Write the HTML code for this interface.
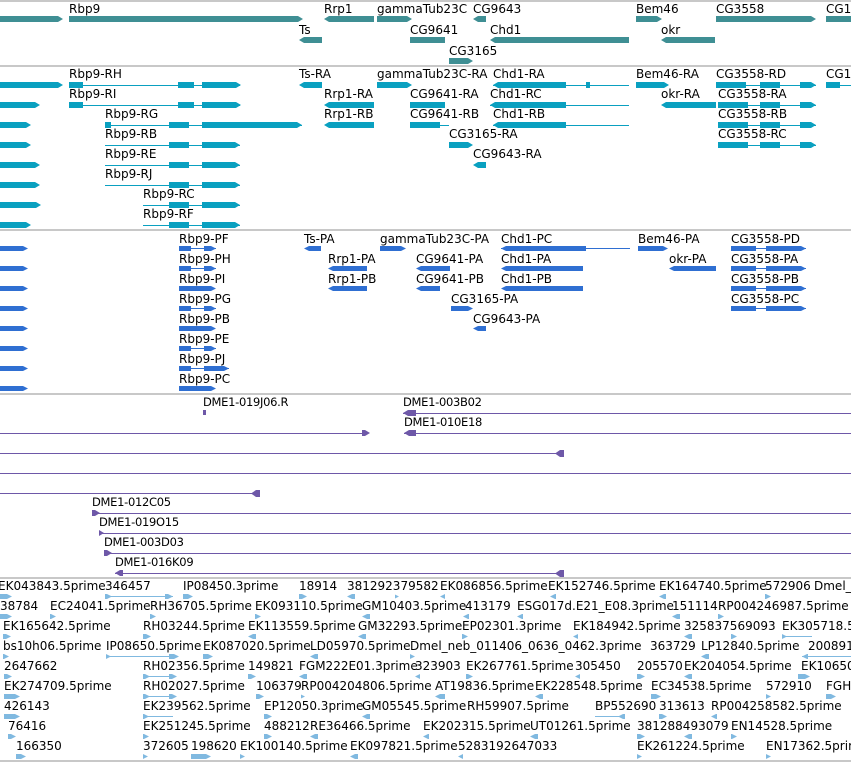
<!DOCTYPE html>
<html><head><meta charset="utf-8"><style>
body{margin:0;width:851px;height:762px;overflow:hidden;background:#fff;position:relative;font-family:"DejaVu Sans","Liberation Sans",sans-serif}
.l{position:absolute;font-size:12px;line-height:13px;white-space:nowrap;color:#000}
.p{position:absolute;font-size:11.5px;line-height:13px;white-space:nowrap;color:#000;letter-spacing:-0.3px}
.b{position:absolute;height:6px}
.g{background:#3f8f94}
.t{background:#0aa0c0}
.c{background:#2f6fd2}
.u{background:#6e58a8}
.e{background:#80b9e0}
.h{position:absolute;height:1px}
.sep{position:absolute;left:0;width:851px;height:2px;background:#c8c8c8}
.r{clip-path:polygon(0 0,calc(100% - 5px) 0,100% 50%,calc(100% - 5px) 100%,0 100%)}
.lf{clip-path:polygon(5px 0,100% 0,100% 100%,5px 100%,0 50%)}
</style></head><body>
<div class="sep" style="top:0"></div>
<div class="sep" style="top:65px"></div>
<div class="sep" style="top:229px"></div>
<div class="sep" style="top:393px"></div>
<div class="sep" style="top:577px"></div>
<div class="sep" style="top:760px"></div>

<!-- Section 1 genes -->
<div class="l" style="left:69px;top:3px">Rbp9</div>
<div class="l" style="left:324px;top:3px">Rrp1</div>
<div class="l" style="left:377px;top:3px">gammaTub23C</div>
<div class="l" style="left:473px;top:3px">CG9643</div>
<div class="l" style="left:636px;top:3px">Bem46</div>
<div class="l" style="left:716px;top:3px">CG3558</div>
<div class="l" style="left:826px;top:3px">CG1</div>
<div class="b g r" style="left:0;top:16px;width:63px"></div>
<div class="b g r" style="left:69px;top:16px;width:234px"></div>
<div class="b g lf" style="left:324px;top:16px;width:50px"></div>
<div class="b g r" style="left:377px;top:16px;width:35px"></div>
<div class="b g lf" style="left:473px;top:16px;width:13px"></div>
<div class="b g r" style="left:636px;top:16px;width:26px"></div>
<div class="b g r" style="left:716px;top:16px;width:100px"></div>
<div class="b g" style="left:826px;top:16px;width:25px"></div>
<div class="l" style="left:299px;top:24px">Ts</div>
<div class="l" style="left:410px;top:24px">CG9641</div>
<div class="l" style="left:490px;top:24px">Chd1</div>
<div class="l" style="left:661px;top:24px">okr</div>
<div class="b g lf" style="left:299px;top:37px;width:23px"></div>
<div class="b g" style="left:420px;top:37px;width:25px;left:410px;width:35px"></div>
<div class="b g lf" style="left:490px;top:37px;width:139px"></div>
<div class="b g lf" style="left:661px;top:37px;width:54px"></div>
<div class="l" style="left:449px;top:45px">CG3165</div>
<div class="b g r" style="left:449px;top:58px;width:24px"></div>

<!-- Section 2 transcripts -->
<div class="l" style="left:69px;top:68px">Rbp9-RH</div>
<div class="l" style="left:299px;top:68px">Ts-RA</div>
<div class="l" style="left:377px;top:68px">gammaTub23C-RA</div>
<div class="l" style="left:493px;top:68px">Chd1-RA</div>
<div class="l" style="left:636px;top:68px">Bem46-RA</div>
<div class="l" style="left:716px;top:68px">CG3558-RD</div>
<div class="l" style="left:826px;top:68px">CG1</div>
<div class="b t r" style="left:0;top:82px;width:63px"></div>
<div class="h t" style="left:69px;top:85px;width:171px"></div>
<div class="b t" style="left:69px;top:82px;width:14px"></div>
<div class="b t" style="left:178px;top:82px;width:16px"></div>
<div class="b t r" style="left:202px;top:82px;width:39px"></div>
<div class="b t lf" style="left:299px;top:82px;width:23px"></div>
<div class="b t r" style="left:377px;top:82px;width:35px"></div>
<div class="h t" style="left:493px;top:85px;width:136px"></div>
<div class="b t lf" style="left:493px;top:82px;width:73px"></div>
<div class="b t" style="left:586px;top:82px;width:4px"></div>
<div class="b t r" style="left:636px;top:82px;width:33px"></div>
<div class="h t" style="left:716px;top:85px;width:100px"></div>
<div class="b t" style="left:716px;top:82px;width:30px"></div>
<div class="b t" style="left:760px;top:82px;width:20px"></div>
<div class="b t r" style="left:800px;top:82px;width:16px"></div>
<div class="b t" style="left:826px;top:82px;width:14px"></div>
<div class="h t" style="left:826px;top:85px;width:25px"></div>

<div class="l" style="left:69px;top:88px">Rbp9-RI</div>
<div class="l" style="left:324px;top:88px">Rrp1-RA</div>
<div class="l" style="left:410px;top:88px">CG9641-RA</div>
<div class="l" style="left:490px;top:88px">Chd1-RC</div>
<div class="l" style="left:661px;top:88px">okr-RA</div>
<div class="l" style="left:718px;top:88px">CG3558-RA</div>
<div class="b t r" style="left:0;top:102px;width:40px"></div>
<div class="h t" style="left:69px;top:105px;width:171px"></div>
<div class="b t" style="left:69px;top:102px;width:14px"></div>
<div class="b t" style="left:178px;top:102px;width:16px"></div>
<div class="b t r" style="left:202px;top:102px;width:39px"></div>
<div class="b t lf" style="left:324px;top:102px;width:50px"></div>
<div class="b t" style="left:410px;top:102px;width:35px"></div>
<div class="h t" style="left:490px;top:105px;width:139px"></div>
<div class="b t lf" style="left:490px;top:102px;width:76px"></div>
<div class="b t lf" style="left:661px;top:102px;width:55px"></div>
<div class="h t" style="left:718px;top:105px;width:98px"></div>
<div class="b t" style="left:718px;top:102px;width:30px"></div>
<div class="b t" style="left:760px;top:102px;width:20px"></div>
<div class="b t r" style="left:800px;top:102px;width:16px"></div>

<div class="l" style="left:105px;top:108px">Rbp9-RG</div>
<div class="l" style="left:324px;top:108px">Rrp1-RB</div>
<div class="l" style="left:410px;top:108px">CG9641-RB</div>
<div class="l" style="left:493px;top:108px">Chd1-RB</div>
<div class="l" style="left:718px;top:108px">CG3558-RB</div>
<div class="b t r" style="left:0;top:122px;width:31px"></div>
<div class="h t" style="left:105px;top:125px;width:197px"></div>
<div class="b t" style="left:105px;top:122px;width:6px"></div>
<div class="b t" style="left:169px;top:122px;width:20px"></div>
<div class="b t r" style="left:202px;top:122px;width:100px"></div>
<div class="b t lf" style="left:324px;top:122px;width:50px"></div>
<div class="b t" style="left:410px;top:122px;width:30px"></div>
<div class="h t" style="left:410px;top:125px;width:39px"></div>
<div class="h t" style="left:493px;top:125px;width:136px"></div>
<div class="b t lf" style="left:493px;top:122px;width:73px"></div>
<div class="h t" style="left:718px;top:125px;width:98px"></div>
<div class="b t" style="left:718px;top:122px;width:30px"></div>
<div class="b t" style="left:760px;top:122px;width:20px"></div>
<div class="b t r" style="left:800px;top:122px;width:16px"></div>

<div class="l" style="left:105px;top:128px">Rbp9-RB</div>
<div class="l" style="left:449px;top:128px">CG3165-RA</div>
<div class="l" style="left:718px;top:128px">CG3558-RC</div>
<div class="b t r" style="left:0;top:142px;width:31px"></div>
<div class="h t" style="left:105px;top:145px;width:135px"></div>
<div class="b t" style="left:169px;top:142px;width:20px"></div>
<div class="b t r" style="left:202px;top:142px;width:38px"></div>
<div class="b t r" style="left:449px;top:142px;width:24px"></div>
<div class="h t" style="left:718px;top:145px;width:98px"></div>
<div class="b t" style="left:718px;top:142px;width:30px"></div>
<div class="b t" style="left:760px;top:142px;width:20px"></div>
<div class="b t r" style="left:800px;top:142px;width:16px"></div>

<div class="l" style="left:105px;top:148px">Rbp9-RE</div>
<div class="l" style="left:473px;top:148px">CG9643-RA</div>
<div class="b t r" style="left:0;top:162px;width:40px"></div>
<div class="h t" style="left:105px;top:165px;width:135px"></div>
<div class="b t" style="left:169px;top:162px;width:20px"></div>
<div class="b t r" style="left:202px;top:162px;width:38px"></div>
<div class="b t lf" style="left:473px;top:162px;width:13px"></div>

<div class="l" style="left:105px;top:168px">Rbp9-RJ</div>
<div class="b t r" style="left:0;top:182px;width:40px"></div>
<div class="h t" style="left:105px;top:185px;width:135px"></div>
<div class="b t" style="left:169px;top:182px;width:20px"></div>
<div class="b t r" style="left:202px;top:182px;width:38px"></div>

<div class="l" style="left:143px;top:188px">Rbp9-RC</div>
<div class="b t r" style="left:0;top:202px;width:41px"></div>
<div class="h t" style="left:143px;top:205px;width:97px"></div>
<div class="b t" style="left:169px;top:202px;width:20px"></div>
<div class="b t r" style="left:202px;top:202px;width:38px"></div>

<div class="l" style="left:143px;top:208px">Rbp9-RF</div>
<div class="b t r" style="left:0;top:222px;width:31px"></div>
<div class="h t" style="left:143px;top:225px;width:97px"></div>
<div class="b t" style="left:169px;top:222px;width:20px"></div>
<div class="b t r" style="left:202px;top:222px;width:38px"></div>

<!-- Section 3 proteins -->
<div class="l" style="left:179px;top:233px">Rbp9-PF</div>
<div class="l" style="left:304px;top:233px">Ts-PA</div>
<div class="l" style="left:380px;top:233px">gammaTub23C-PA</div>
<div class="l" style="left:501px;top:233px">Chd1-PC</div>
<div class="l" style="left:638px;top:233px">Bem46-PA</div>
<div class="l" style="left:731px;top:233px">CG3558-PD</div>
<div class="l" style="left:328px;top:253px">Rrp1-PA</div>
<div class="l" style="left:416px;top:253px">CG9641-PA</div>
<div class="l" style="left:501px;top:253px">Chd1-PA</div>
<div class="l" style="left:669px;top:253px">okr-PA</div>
<div class="l" style="left:731px;top:253px">CG3558-PA</div>
<div class="l" style="left:179px;top:253px">Rbp9-PH</div>
<div class="l" style="left:179px;top:273px">Rbp9-PI</div>
<div class="l" style="left:328px;top:273px">Rrp1-PB</div>
<div class="l" style="left:416px;top:273px">CG9641-PB</div>
<div class="l" style="left:501px;top:273px">Chd1-PB</div>
<div class="l" style="left:731px;top:273px">CG3558-PB</div>
<div class="l" style="left:179px;top:293px">Rbp9-PG</div>
<div class="l" style="left:451px;top:293px">CG3165-PA</div>
<div class="l" style="left:731px;top:293px">CG3558-PC</div>
<div class="l" style="left:179px;top:313px">Rbp9-PB</div>
<div class="l" style="left:473px;top:313px">CG9643-PA</div>
<div class="l" style="left:179px;top:333px">Rbp9-PE</div>
<div class="l" style="left:179px;top:353px">Rbp9-PJ</div>
<div class="l" style="left:179px;top:373px">Rbp9-PC</div>

<div class="b c r" style="left:0;top:246px;width:28px;height:5px"></div>
<div class="b c r" style="left:0;top:266px;width:28px;height:5px"></div>
<div class="b c r" style="left:0;top:286px;width:28px;height:5px"></div>
<div class="b c r" style="left:0;top:306px;width:28px;height:5px"></div>
<div class="b c r" style="left:0;top:326px;width:28px;height:5px"></div>
<div class="b c r" style="left:0;top:346px;width:28px;height:5px"></div>
<div class="b c r" style="left:0;top:366px;width:28px;height:5px"></div>
<div class="b c r" style="left:0;top:386px;width:28px;height:5px"></div>

<div class="h c" style="left:179px;top:248px;width:37px"></div><div class="b c" style="left:179px;top:246px;width:12px;height:5px"></div><div class="b c r" style="left:204px;top:246px;width:12px;height:5px"></div>
<div class="h c" style="left:179px;top:268px;width:37px"></div><div class="b c" style="left:179px;top:266px;width:12px;height:5px"></div><div class="b c r" style="left:204px;top:266px;width:12px;height:5px"></div>
<div class="b c r" style="left:179px;top:286px;width:37px;height:5px"></div>
<div class="h c" style="left:179px;top:308px;width:37px"></div><div class="b c" style="left:179px;top:306px;width:12px;height:5px"></div><div class="b c r" style="left:204px;top:306px;width:12px;height:5px"></div>
<div class="b c r" style="left:179px;top:326px;width:37px;height:5px"></div>
<div class="h c" style="left:179px;top:348px;width:37px"></div><div class="b c" style="left:179px;top:346px;width:12px;height:5px"></div><div class="b c r" style="left:204px;top:346px;width:12px;height:5px"></div>
<div class="h c" style="left:179px;top:368px;width:50px"></div><div class="b c" style="left:179px;top:366px;width:12px;height:5px"></div><div class="b c r" style="left:204px;top:366px;width:25px;height:5px"></div>
<div class="b c r" style="left:179px;top:386px;width:37px;height:5px"></div>

<div class="b c lf" style="left:304px;top:246px;width:17px;height:5px"></div>
<div class="b c r" style="left:380px;top:246px;width:26px;height:5px"></div>
<div class="h c" style="left:501px;top:248px;width:129px"></div><div class="b c lf" style="left:501px;top:246px;width:85px;height:5px"></div>
<div class="b c r" style="left:638px;top:246px;width:30px;height:5px"></div>
<div class="h c" style="left:731px;top:248px;width:75px"></div><div class="b c" style="left:731px;top:246px;width:25px;height:5px"></div><div class="b c r" style="left:766px;top:246px;width:40px;height:5px"></div>
<div class="b c lf" style="left:328px;top:266px;width:39px;height:5px"></div>
<div class="b c lf" style="left:416px;top:266px;width:34px;height:5px"></div>
<div class="b c lf" style="left:501px;top:266px;width:82px;height:5px"></div>
<div class="b c lf" style="left:669px;top:266px;width:47px;height:5px"></div>
<div class="h c" style="left:731px;top:268px;width:75px"></div><div class="b c" style="left:731px;top:266px;width:25px;height:5px"></div><div class="b c r" style="left:766px;top:266px;width:40px;height:5px"></div>
<div class="b c lf" style="left:328px;top:286px;width:39px;height:5px"></div>
<div class="b c lf" style="left:416px;top:286px;width:24px;height:5px"></div>
<div class="b c lf" style="left:501px;top:286px;width:82px;height:5px"></div>
<div class="h c" style="left:731px;top:288px;width:75px"></div><div class="b c" style="left:731px;top:286px;width:25px;height:5px"></div><div class="b c r" style="left:766px;top:286px;width:40px;height:5px"></div>
<div class="b c r" style="left:451px;top:306px;width:22px;height:5px"></div>
<div class="h c" style="left:731px;top:308px;width:75px"></div><div class="b c" style="left:731px;top:306px;width:25px;height:5px"></div><div class="b c r" style="left:766px;top:306px;width:40px;height:5px"></div>
<div class="b c lf" style="left:473px;top:326px;width:13px;height:5px"></div>

<!-- Section 4 purple -->
<div class="p" style="left:203px;top:396px">DME1-019J06.R</div>
<div class="b u" style="left:203px;top:410px;width:3px;height:5px"></div>
<div class="p" style="left:403px;top:396px">DME1-003B02</div>
<div class="h u" style="left:403px;top:413px;width:448px"></div><div class="b u lf" style="left:403px;top:410px;width:13px;height:6px"></div>
<div class="p" style="left:404px;top:416px">DME1-010E18</div>
<div class="h u" style="left:404px;top:433px;width:447px"></div><div class="b u lf" style="left:404px;top:430px;width:12px;height:6px"></div>
<div class="h u" style="left:0;top:433px;width:366px"></div><div class="b u r" style="left:362px;top:430px;width:8px;height:6px"></div>
<div class="h u" style="left:0;top:453px;width:560px"></div><div class="b u lf" style="left:555px;top:450px;width:9px;height:7px"></div>
<div class="h u" style="left:0;top:473px;width:851px"></div>
<div class="h u" style="left:0;top:493px;width:256px"></div><div class="b u lf" style="left:251px;top:490px;width:9px;height:7px"></div>
<div class="p" style="left:92px;top:496px">DME1-012C05</div>
<div class="h u" style="left:92px;top:513px;width:759px"></div><div class="b u r" style="left:92px;top:510px;width:8px;height:6px"></div>
<div class="p" style="left:99px;top:516px">DME1-019O15</div>
<div class="h u" style="left:99px;top:533px;width:752px"></div><div class="b u r" style="left:99px;top:530px;width:5px;height:6px"></div>
<div class="p" style="left:104px;top:536px">DME1-003D03</div>
<div class="h u" style="left:104px;top:553px;width:747px"></div><div class="b u r" style="left:104px;top:550px;width:8px;height:6px"></div>
<div class="p" style="left:115px;top:556px">DME1-016K09</div>
<div class="h u" style="left:115px;top:573px;width:446px"></div><div class="b u lf" style="left:115px;top:570px;width:8px;height:6px"></div><div class="b u lf" style="left:555px;top:570px;width:9px;height:7px"></div>

<!-- Section 5 ESTs -->
<div class="l" style="left:-2px;top:580px">EK043843.5prime</div><div class="l" style="left:105px;top:580px">346457</div><div class="l" style="left:183px;top:580px">IP08450.3prime</div><div class="l" style="left:299px;top:580px">18914</div><div class="l" style="left:347px;top:580px">381292379582</div><div class="l" style="left:440px;top:580px">EK086856.5prime</div><div class="l" style="left:548px;top:580px">EK152746.5prime</div><div class="l" style="left:659px;top:580px">EK164740.5prime</div><div class="l" style="left:765px;top:580px">572906</div><div class="l" style="left:814px;top:580px">Dmel_n</div>
<div class="l" style="left:0;top:600px">38784</div><div class="l" style="left:50px;top:600px">EC24041.5prime</div><div class="l" style="left:150px;top:600px">RH36705.5prime</div><div class="l" style="left:255px;top:600px">EK093110.5prime</div><div class="l" style="left:362px;top:600px">GM10403.5prime</div><div class="l" style="left:465px;top:600px">413179</div><div class="l" style="left:517px;top:600px">ESG017d.E21_E08.3prime</div><div class="l" style="left:672px;top:600px">151114</div><div class="l" style="left:718px;top:600px">RP004246987.5prime</div>
<div class="l" style="left:3px;top:620px">EK165642.5prime</div><div class="l" style="left:143px;top:620px">RH03244.5prime</div><div class="l" style="left:248px;top:620px">EK113559.5prime</div><div class="l" style="left:358px;top:620px">GM32293.5prime</div><div class="l" style="left:462px;top:620px">EP02301.3prime</div><div class="l" style="left:573px;top:620px">EK184942.5prime</div><div class="l" style="left:684px;top:620px">325837569093</div><div class="l" style="left:782px;top:620px">EK305718.5</div>
<div class="l" style="left:3px;top:640px">bs10h06.5prime</div><div class="l" style="left:106px;top:640px">IP08650.5prime</div><div class="l" style="left:203px;top:640px">EK087020.5prime</div><div class="l" style="left:310px;top:640px">LD05970.5prime</div><div class="l" style="left:410px;top:640px">Dmel_neb_011406_0636_0462.3prime</div><div class="l" style="left:650px;top:640px">363729</div><div class="l" style="left:701px;top:640px">LP12840.5prime</div><div class="l" style="left:808px;top:640px">200891</div>
<div class="l" style="left:4px;top:660px">2647662</div><div class="l" style="left:143px;top:660px">RH02356.5prime</div><div class="l" style="left:248px;top:660px">149821</div><div class="l" style="left:299px;top:660px">FGM222E01.3prime</div><div class="l" style="left:415px;top:660px">323903</div><div class="l" style="left:466px;top:660px">EK267761.5prime</div><div class="l" style="left:575px;top:660px">305450</div><div class="l" style="left:637px;top:660px">205570</div><div class="l" style="left:684px;top:660px">EK204054.5prime</div><div class="l" style="left:801px;top:660px">EK10650</div>
<div class="l" style="left:4px;top:680px">EK274709.5prime</div><div class="l" style="left:143px;top:680px">RH02027.5prime</div><div class="l" style="left:256px;top:680px">106379</div><div class="l" style="left:301px;top:680px">RP004204806.5prime</div><div class="l" style="left:435px;top:680px">AT19836.5prime</div><div class="l" style="left:535px;top:680px">EK228548.5prime</div><div class="l" style="left:651px;top:680px">EC34538.5prime</div><div class="l" style="left:766px;top:680px">572910</div><div class="l" style="left:826px;top:680px">FGH</div>
<div class="l" style="left:4px;top:700px">426143</div><div class="l" style="left:143px;top:700px">EK239562.5prime</div><div class="l" style="left:264px;top:700px">EP12050.3prime</div><div class="l" style="left:362px;top:700px">GM05545.5prime</div><div class="l" style="left:467px;top:700px">RH59907.5prime</div><div class="l" style="left:595px;top:700px">BP552690</div><div class="l" style="left:659px;top:700px">313613</div><div class="l" style="left:711px;top:700px">RP004258582.5prime</div>
<div class="l" style="left:8px;top:720px">76416</div><div class="l" style="left:143px;top:720px">EK251245.5prime</div><div class="l" style="left:264px;top:720px">488212</div><div class="l" style="left:310px;top:720px">RE36466.5prime</div><div class="l" style="left:423px;top:720px">EK202315.5prime</div><div class="l" style="left:530px;top:720px">UT01261.5prime</div><div class="l" style="left:637px;top:720px">381288493079</div><div class="l" style="left:731px;top:720px">EN14528.5prime</div>
<div class="l" style="left:16px;top:740px">166350</div><div class="l" style="left:143px;top:740px">372605</div><div class="l" style="left:191px;top:740px">198620</div><div class="l" style="left:240px;top:740px">EK100140.5prime</div><div class="l" style="left:350px;top:740px">EK097821.5prime</div><div class="l" style="left:458px;top:740px">5283192647033</div><div class="l" style="left:637px;top:740px">EK261224.5prime</div><div class="l" style="left:766px;top:740px">EN17362.5prime</div>

<!-- EST markers -->
<div class="b e r" style="left:0;top:594px;width:12px;height:5px"></div><div class="h e" style="left:105px;top:596px;width:68px"></div><div class="b e r" style="left:105px;top:594px;width:7px;height:5px"></div><div class="b e r" style="left:165px;top:594px;width:8px;height:5px"></div><div class="b e r" style="left:183px;top:594px;width:10px;height:5px"></div><div class="b e r" style="left:299px;top:594px;width:8px;height:5px"></div><div class="b e lf" style="left:347px;top:594px;width:8px;height:5px"></div><div class="b e r" style="left:395px;top:594px;width:4px;height:5px"></div><div class="b e lf" style="left:440px;top:594px;width:5px;height:5px"></div><div class="b e lf" style="left:550px;top:594px;width:6px;height:5px"></div><div class="b e lf" style="left:659px;top:594px;width:7px;height:5px"></div><div class="b e r" style="left:765px;top:594px;width:6px;height:5px"></div>
<div class="b e r" style="left:0;top:614px;width:12px;height:5px"></div><div class="b e r" style="left:50px;top:614px;width:6px;height:5px"></div><div class="b e r" style="left:150px;top:614px;width:6px;height:5px"></div><div class="b e r" style="left:255px;top:614px;width:6px;height:5px"></div><div class="b e lf" style="left:362px;top:614px;width:8px;height:5px"></div><div class="b e lf" style="left:463px;top:614px;width:6px;height:5px"></div><div class="b e lf" style="left:517px;top:614px;width:6px;height:5px"></div><div class="b e lf" style="left:672px;top:614px;width:8px;height:5px"></div><div class="b e r" style="left:718px;top:614px;width:6px;height:5px"></div>
<div class="b e r" style="left:3px;top:634px;width:8px;height:5px"></div><div class="b e r" style="left:143px;top:634px;width:8px;height:5px"></div><div class="b e lf" style="left:248px;top:634px;width:8px;height:5px"></div><div class="b e lf" style="left:358px;top:634px;width:8px;height:5px"></div><div class="b e r" style="left:462px;top:634px;width:6px;height:5px"></div><div class="b e lf" style="left:573px;top:634px;width:5px;height:5px"></div><div class="b e lf" style="left:684px;top:634px;width:8px;height:5px"></div><div class="b e r" style="left:731px;top:634px;width:6px;height:5px"></div><div class="h e" style="left:782px;top:636px;width:30px"></div><div class="b e r" style="left:782px;top:634px;width:5px;height:5px"></div>
<div class="b e r" style="left:3px;top:654px;width:6px;height:5px"></div><div class="h e" style="left:106px;top:656px;width:67px"></div><div class="b e r" style="left:106px;top:654px;width:5px;height:5px"></div><div class="b e r" style="left:169px;top:654px;width:10px;height:5px"></div><div class="b e r" style="left:203px;top:654px;width:10px;height:5px"></div><div class="b e lf" style="left:310px;top:654px;width:8px;height:5px"></div><div class="b e r" style="left:410px;top:654px;width:5px;height:5px"></div><div class="b e lf" style="left:701px;top:654px;width:8px;height:5px"></div><div class="h e" style="left:802px;top:656px;width:49px"></div><div class="b e lf" style="left:802px;top:654px;width:6px;height:5px"></div>
<div class="b e r" style="left:4px;top:674px;width:8px;height:5px"></div><div class="h e" style="left:143px;top:676px;width:30px"></div><div class="b e r" style="left:143px;top:674px;width:7px;height:5px"></div><div class="b e r" style="left:169px;top:674px;width:8px;height:5px"></div><div class="b e r" style="left:248px;top:674px;width:8px;height:5px"></div><div class="b e lf" style="left:299px;top:674px;width:8px;height:5px"></div><div class="b e lf" style="left:415px;top:674px;width:5px;height:5px"></div><div class="b e r" style="left:466px;top:674px;width:7px;height:5px"></div><div class="b e lf" style="left:575px;top:674px;width:5px;height:5px"></div><div class="b e r" style="left:637px;top:674px;width:8px;height:5px"></div><div class="b e lf" style="left:684px;top:674px;width:8px;height:5px"></div><div class="b e r" style="left:798px;top:674px;width:12px;height:5px"></div>
<div class="b e r" style="left:4px;top:694px;width:16px;height:5px"></div><div class="h e" style="left:143px;top:696px;width:30px"></div><div class="b e r" style="left:143px;top:694px;width:7px;height:5px"></div><div class="b e r" style="left:169px;top:694px;width:8px;height:5px"></div><div class="b e r" style="left:256px;top:694px;width:8px;height:5px"></div><div class="b e r" style="left:301px;top:694px;width:4px;height:5px"></div><div class="b e lf" style="left:435px;top:694px;width:10px;height:5px"></div><div class="b e lf" style="left:535px;top:694px;width:8px;height:5px"></div><div class="b e r" style="left:651px;top:694px;width:10px;height:5px"></div><div class="b e r" style="left:766px;top:694px;width:5px;height:5px"></div><div class="b e r" style="left:826px;top:694px;width:10px;height:5px"></div>
<div class="b e r" style="left:4px;top:714px;width:16px;height:5px"></div><div class="h e" style="left:143px;top:716px;width:30px"></div><div class="b e r" style="left:143px;top:714px;width:6px;height:5px"></div><div class="b e r" style="left:264px;top:714px;width:8px;height:5px"></div><div class="b e lf" style="left:362px;top:714px;width:8px;height:5px"></div><div class="h e" style="left:595px;top:716px;width:30px"></div><div class="b e lf" style="left:618px;top:714px;width:7px;height:5px"></div><div class="b e r" style="left:659px;top:714px;width:8px;height:5px"></div><div class="b e lf" style="left:711px;top:714px;width:6px;height:5px"></div>
<div class="b e r" style="left:8px;top:734px;width:8px;height:5px"></div><div class="b e r" style="left:143px;top:734px;width:6px;height:5px"></div><div class="b e r" style="left:264px;top:734px;width:8px;height:5px"></div><div class="b e lf" style="left:310px;top:734px;width:8px;height:5px"></div><div class="b e lf" style="left:423px;top:734px;width:6px;height:5px"></div><div class="b e lf" style="left:530px;top:734px;width:8px;height:5px"></div><div class="b e r" style="left:637px;top:734px;width:8px;height:5px"></div><div class="b e lf" style="left:684px;top:734px;width:8px;height:5px"></div><div class="b e r" style="left:731px;top:734px;width:6px;height:5px"></div>
<div class="b e r" style="left:16px;top:754px;width:10px;height:5px"></div><div class="b e r" style="left:143px;top:754px;width:5px;height:5px"></div><div class="b e r" style="left:191px;top:754px;width:20px;height:5px"></div><div class="b e r" style="left:240px;top:754px;width:5px;height:5px"></div><div class="b e lf" style="left:350px;top:754px;width:8px;height:5px"></div><div class="b e lf" style="left:458px;top:754px;width:5px;height:5px"></div><div class="b e r" style="left:637px;top:754px;width:5px;height:5px"></div><div class="b e r" style="left:766px;top:754px;width:5px;height:5px"></div>
</body></html>
